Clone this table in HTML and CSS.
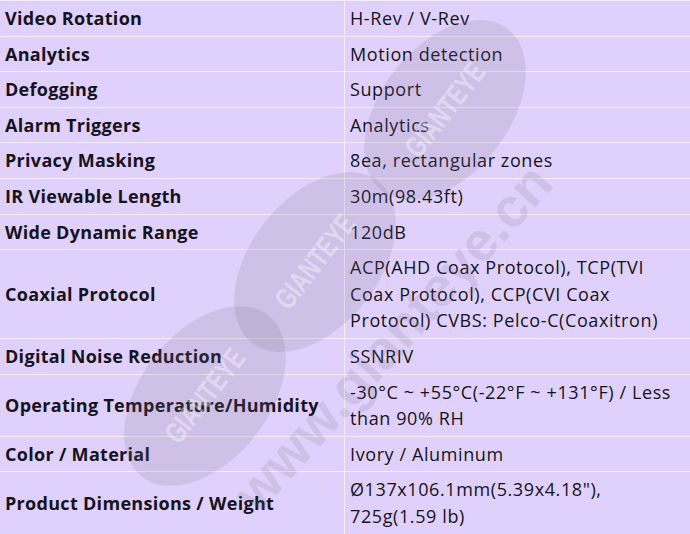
FILE: index.html
```html
<!DOCTYPE html>
<html>
<head>
<meta charset="utf-8">
<link rel="stylesheet" href="styles.css">
</head>
<body>
<div class="page">
<table class="spec">
<tbody>
<tr><th>Video Rotation</th><td>H-Rev / V-Rev</td></tr>
<tr><th>Analytics</th><td>Motion detection</td></tr>
<tr><th>Defogging</th><td>Support</td></tr>
<tr><th>Alarm Triggers</th><td>Analytics</td></tr>
<tr><th>Privacy Masking</th><td>8ea, rectangular zones</td></tr>
<tr><th>IR Viewable Length</th><td>30m(98.43ft)</td></tr>
<tr><th>Wide Dynamic Range</th><td>120dB</td></tr>
<tr><th>Coaxial Protocol</th><td>ACP(AHD Coax Protocol), TCP(TVI<br>Coax Protocol), CCP(CVI Coax<br>Protocol) CVBS: Pelco-C(Coaxitron)</td></tr>
<tr><th>Digital Noise Reduction</th><td>SSNRIV</td></tr>
<tr><th>Operating Temperature/Humidity</th><td>-30°C ~ +55°C(-22°F ~ +131°F) / Less<br>than 90% RH</td></tr>
<tr><th>Color / Material</th><td>Ivory / Aluminum</td></tr>
<tr><th>Product Dimensions / Weight</th><td>Ø137x106.1mm(5.39x4.18"),<br>725g(1.59 lb)</td></tr>
</tbody>
</table>
<div class="wm">
  <div class="oval oval1"><span>GIANTEYE</span></div>
  <div class="oval oval2"><span>GIANTEYE</span></div>
  <div class="oval oval3"><span>GIANTEYE</span></div>
  <div class="url">www.gianteye.cn</div>
</div>
</div>
</body>
</html>
```
FILE: styles.css
```css
html, body {
  margin: 0;
  padding: 0;
  background: #ffffff;
}
.page {
  position: relative;
  width: 690px;
  height: 534px;
  overflow: hidden;
  background: #dfd1fb;
}
.spec {
  width: 690px;
  border-collapse: collapse;
  font-family: "Open Sans", "Noto Sans", sans-serif;
  font-size: 18px;
  line-height: 26.6px;
  color: #16131e;
}
.spec th, .spec td {
  border: 1px solid #f4eefc;
  padding: 4px 5px 4px 5px;
  text-align: left;
  vertical-align: middle;
  background: #dfd1fb;
  white-space: nowrap;
}
.spec th {
  width: 334px;
  font-weight: 700;
  letter-spacing: 0.3px;
  border-left: none;
}
.spec td {
  font-weight: 400;
  letter-spacing: 0.6px;
  border-right: none;
}
.wm {
  position: absolute;
  left: 0;
  top: 0;
  width: 690px;
  height: 534px;
  pointer-events: none;
}
.oval {
  position: absolute;
  width: 205px;
  height: 128px;
  border-radius: 50%;
  background: rgba(125, 115, 135, 0.17);
  display: flex;
  align-items: center;
  justify-content: center;
  transform: translate(-50%, -50%) rotate(-52deg);
}
.oval span {
  font-family: "Liberation Sans", "DejaVu Sans", sans-serif;
  font-weight: 700;
  font-size: 30px;
  color: rgba(255, 255, 255, 0.4);
  transform: scaleX(0.72);
  white-space: nowrap;
}
.oval1 { left: 445px; top: 110px; }
.oval2 { left: 315px; top: 262px; }
.oval3 { left: 205px; top: 396px; }
.url {
  position: absolute;
  left: 393px;
  top: 338px;
  font-family: "Liberation Sans", "DejaVu Sans", sans-serif;
  font-weight: 700;
  font-size: 55px;
  line-height: 1;
  color: rgba(125, 115, 135, 0.17);
  transform: translate(-50%, -50%) rotate(-48deg);
  white-space: nowrap;
}
```
